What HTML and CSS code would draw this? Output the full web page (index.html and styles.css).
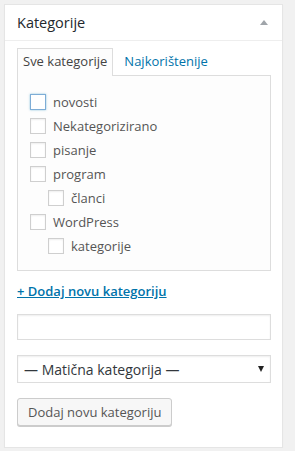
FILE: index.html
```html
<!DOCTYPE html>
<html lang="hr">
<head>
    <meta charset="UTF-8">
    <title>Kategorije</title>
    <link rel="stylesheet" href="styles.css">
</head>
<body>
    <div class="postbox">
        <div class="hndle">
            <span>Kategorije</span>
            <span class="toggle"></span>
        </div>
        <div class="inside">
            <ul class="category-tabs">
                <li class="tab active">Sve kategorije</li>
                <li class="tab">Najkorištenije</li>
            </ul>
            <div class="tabs-panel">
                <ul class="checklist">
                    <li><span class="cb focus"></span>novosti</li>
                    <li><span class="cb"></span>Nekategorizirano</li>
                    <li><span class="cb"></span>pisanje</li>
                    <li><span class="cb"></span>program</li>
                    <li class="child"><span class="cb"></span>članci</li>
                    <li><span class="cb"></span>WordPress</li>
                    <li class="child"><span class="cb"></span>kategorije</li>
                </ul>
            </div>
            <a class="add-new" href="#">+ Dodaj novu kategoriju</a>
            <input class="new-cat" type="text">
            <div class="select-wrap">
                <select class="parent-cat">
                    <option>— Matična kategorija —</option>
                </select>
            </div>
            <div><button class="button" type="button">Dodaj novu kategoriju</button></div>
        </div>
    </div>
</body>
</html>
```

FILE: styles.css
```css
body {
    margin: 0;
    background-color: #f1f1f1;
    font-family: "Open Sans", "Noto Sans", sans-serif;
    font-size: 13px;
    color: #444;
}
.postbox {
    margin: 4px 12px 0 4px;
    height: 442px;
    background-color: #fff;
    border: 1px solid #e5e5e5;
    box-shadow: 0 1px 1px rgba(0,0,0,0.04);
}
.hndle {
    display: flex;
    justify-content: space-between;
    align-items: center;
    height: 35px;
    padding: 0 14px 0 12px;
    border-bottom: 1px solid #eee;
    font-size: 14.5px;
    color: #23282d;
}
.toggle {
    width: 0;
    height: 0;
    border-left: 4px solid transparent;
    border-right: 4px solid transparent;
    border-bottom: 5px solid #a0a5aa;
}
.inside {
    padding: 7px 11px 0 12px;
}
.category-tabs {
    display: flex;
    margin: 0;
    padding: 0;
    list-style: none;
}
.tab {
    padding: 3px 5px 5px;
    line-height: 18px;
    border: 1px solid transparent;
    border-bottom: none;
    color: #0073aa;
}
.tab.active {
    position: relative;
    z-index: 1;
    margin-bottom: -1px;
    padding-bottom: 6px;
    border-color: #ddd;
    background-color: #fdfdfd;
    color: #444;
}
.tab + .tab {
    margin-left: 5px;
}
.tabs-panel {
    height: 194px;
    border: 1px solid #ddd;
    background-color: #fdfdfd;
}
.checklist {
    margin: 0;
    padding: 14px 12px 0;
    list-style: none;
}
.checklist li {
    display: flex;
    align-items: center;
    height: 24px;
    color: #555;
}
.checklist li.child {
    padding-left: 18px;
}
.cb {
    width: 14px;
    height: 14px;
    margin-right: 7px;
    border: 1px solid #cfcfcf;
    background-color: #fff;
    box-shadow: inset 0 1px 2px rgba(0,0,0,0.07);
}
.cb.focus {
    border-color: #7eadd6;
    box-shadow: 0 0 2px rgba(30,140,190,0.5);
}
.add-new {
    display: block;
    margin-top: 10px;
    line-height: 20px;
    font-weight: 600;
    color: #0073aa;
}
.new-cat {
    display: block;
    box-sizing: border-box;
    width: 100%;
    height: 26px;
    margin: 13px 0 0;
    border: 1px solid #ddd;
    box-shadow: inset 0 1px 2px rgba(0,0,0,0.07);
}
.select-wrap {
    position: relative;
    margin-top: 15px;
}
.select-wrap::after {
    content: "";
    position: absolute;
    right: 7px;
    top: 11px;
    border-left: 3px solid transparent;
    border-right: 3px solid transparent;
    border-top: 6px solid #222;
    pointer-events: none;
}
.parent-cat {
    display: block;
    box-sizing: border-box;
    width: 100%;
    height: 28px;
    padding: 0 6px;
    border: 1px solid #ddd;
    border-radius: 0;
    background-color: #fff;
    box-shadow: inset 0 1px 2px rgba(0,0,0,0.07);
    font-family: "Open Sans", "Noto Sans", sans-serif;
    font-size: 14px;
    color: #32373c;
    appearance: none;
    -webkit-appearance: none;
}
.button {
    height: 28px;
    margin-top: 15px;
    padding: 0 10px;
    border: 1px solid #ccc;
    border-radius: 3px;
    background-color: #f7f7f7;
    box-shadow: 0 1px 0 #ccc;
    font-family: "Open Sans", "Noto Sans", sans-serif;
    font-size: 13px;
    color: #555;
}
```
